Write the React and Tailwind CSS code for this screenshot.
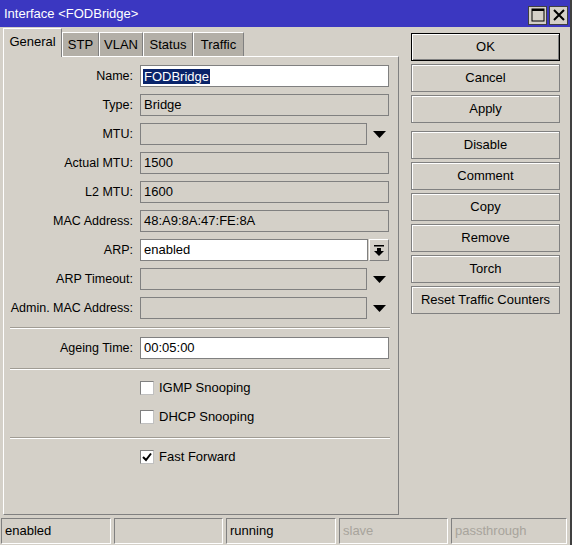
import React from "react";

function Field({ value, white, w = "w-[249px]", selected }) {
  return (
    <div
      className={`${w} h-[22px] border border-[#808080] flex items-center pl-[2px] ${
        white ? "bg-white" : "bg-[#d4d0c8]"
      }`}
    >
      {selected ? (
        <span className="bg-[#0a246a] text-white leading-[15px] px-px">{value}</span>
      ) : (
        <span className="pl-px">{value}</span>
      )}
    </div>
  );
}

function Arrow() {
  return (
    <div className="w-[22px] h-[22px] flex items-center justify-center pl-[2px]">
      <svg width="13" height="7" viewBox="0 0 13 7">
        <polygon points="0,0 13,0 6.5,7" fill="#000" />
      </svg>
    </div>
  );
}

function Row({ label, children }) {
  return (
    <div className="flex items-center h-[22px]">
      <div className="w-[130px] text-right pr-[1px] whitespace-nowrap text-[12.5px]">{label}</div>
      <div className="ml-[6px] flex">{children}</div>
    </div>
  );
}

function Sep({ mt }) {
  return (
    <div className={`${mt} ml-[6px] w-[380px] h-[2px] border-t border-[#a09c94] border-b border-b-white`} />
  );
}

function Check({ label, checked, mt }) {
  return (
    <div className={`${mt} flex items-center h-[22px] pl-[136px]`}>
      <div className="w-[14px] h-[14px] bg-white border border-t-[#808080] border-l-[#808080] border-b-[#c0c0c0] border-r-[#c0c0c0] flex items-center justify-center">
        {checked && (
          <svg width="12" height="12" viewBox="0 0 12 12">
            <path d="M2 6 L5 9 L10 2.5" stroke="#000" strokeWidth="2" fill="none" />
          </svg>
        )}
      </div>
      <span className="ml-[5px]">{label}</span>
    </div>
  );
}

function Btn({ children, def, mt = "" }) {
  return (
    <div
      className={`${mt} w-[149px] h-[28px] flex items-center justify-center border ${
        def
          ? "border-black shadow-[inset_1px_1px_0_#fff,inset_-1px_-1px_0_#808080]"
          : "border-[#808080] shadow-[inset_1px_1px_0_#fff]"
      }`}
    >
      {children}
    </div>
  );
}

function Cell({ text, gray, w = "w-[110px]" }) {
  return (
    <div
      className={`${w} h-[26px] border border-t-[#808080] border-l-[#808080] border-b-white border-r-white flex items-center pl-[3px] ${
        gray ? "text-[#a8a49c]" : "text-black"
      }`}
    >
      {text}
    </div>
  );
}

export default function App() {
  return (
    <div className="w-[572px] h-[545px] bg-[#d4d0c8] font-['Liberation_Sans',Arial,sans-serif] text-[13px] text-black border-r-2 border-[#404040] flex flex-col overflow-hidden">
      {/* title bar */}
      <div className="h-[27px] bg-[#3b37c1] flex items-center shrink-0">
        <span className="pl-[4px] text-white">Interface &lt;FODBridge&gt;</span>
        <div className="ml-auto flex gap-[2px] mr-[2px] mt-[3px]">
          <div className="w-[19px] h-[19px] bg-[#d4d0c8] border border-[#404040] flex items-center justify-center">
            <svg width="14" height="14" viewBox="0 0 14 14">
              <rect x="1" y="1" width="12" height="12" fill="none" stroke="#000" strokeWidth="1" />
              <rect x="1" y="1" width="12" height="2" fill="#000" />
            </svg>
          </div>
          <div className="w-[19px] h-[19px] bg-[#d4d0c8] border border-[#404040] flex items-center justify-center">
            <svg width="14" height="14" viewBox="0 0 14 14">
              <path d="M2 2 L12 12 M12 2 L2 12" stroke="#000" strokeWidth="2" />
            </svg>
          </div>
        </div>
      </div>

      {/* body */}
      <div className="flex h-[491px] shrink-0">
        {/* left */}
        <div className="ml-[3px] w-[396px] flex flex-col">
          <div className="mt-[1px] h-[28px] flex items-end">
            <div className="relative z-10 w-[59px] h-[29px] -mb-px bg-[#d4d0c8] border-l border-t border-white border-r border-r-[#808080] flex items-center justify-center pb-[3px]">
              General
            </div>
            {[
              ["STP", "w-[37px]"],
              ["VLAN", "w-[44px]"],
              ["Status", "w-[50px]"],
              ["Traffic", "w-[51px]"],
            ].map(([t, w]) => (
              <div
                key={t}
                className={`${w} h-[24px] bg-[#b3afa7] border-l border-t border-white border-r border-r-[#808080] flex items-center justify-center`}
              >
                {t}
              </div>
            ))}
          </div>
          <div className="h-[459px] border border-t-white border-l-white border-r-[#808080] border-b-[#808080] pt-[8px] flex flex-col gap-[7px]">
            <Row label="Name:">
              <Field value="FODBridge" white selected />
            </Row>
            <Row label="Type:">
              <Field value="Bridge" />
            </Row>
            <Row label="MTU:">
              <Field value="" w="w-[227px]" />
              <Arrow />
            </Row>
            <Row label="Actual MTU:">
              <Field value="1500" />
            </Row>
            <Row label="L2 MTU:">
              <Field value="1600" />
            </Row>
            <Row label="MAC Address:">
              <Field value="48:A9:8A:47:FE:8A" />
            </Row>
            <Row label="ARP:">
              <Field value="enabled" white w="w-[228px]" />
              <div className="ml-px w-[20px] h-[22px] border border-t-white border-l-white border-b-[#808080] border-r-[#808080] flex items-center justify-center">
                <svg width="10" height="11" viewBox="0 0 10 11">
                  <rect x="0" y="0" width="10" height="1.5" fill="#000" />
                  <rect x="3" y="3" width="4" height="3" fill="#000" />
                  <polygon points="0,6 10,6 5,11" fill="#000" />
                </svg>
              </div>
            </Row>
            <Row label="ARP Timeout:">
              <Field value="" w="w-[227px]" />
              <Arrow />
            </Row>
            <Row label="Admin. MAC Address:">
              <Field value="" w="w-[227px]" />
              <Arrow />
            </Row>
            <div className="flex flex-col">
              <Sep mt="mt-px" />
              <div className="mt-[8px]">
                <Row label="Ageing Time:">
                  <Field value="00:05:00" white />
                </Row>
              </div>
              <Sep mt="mt-[9px]" />
              <Check label="IGMP Snooping" mt="mt-[7px]" />
              <Check label="DHCP Snooping" mt="mt-[7px]" />
              <Sep mt="mt-[9px]" />
              <Check label="Fast Forward" checked mt="mt-[7px]" />
            </div>
          </div>
        </div>

        {/* right buttons */}
        <div className="ml-[12px] pt-[6px] flex flex-col gap-[3px]">
          <Btn def>OK</Btn>
          <Btn>Cancel</Btn>
          <Btn>Apply</Btn>
          <Btn mt="mt-[5px]">Disable</Btn>
          <Btn>Comment</Btn>
          <Btn>Copy</Btn>
          <Btn>Remove</Btn>
          <Btn>Torch</Btn>
          <Btn>Reset Traffic Counters</Btn>
        </div>
      </div>

      {/* status bar */}
      <div className="flex gap-[3px] pl-[1px] shrink-0">
        <Cell text="enabled" />
        <Cell text="" w="w-[109px]" />
        <Cell text="running" />
        <Cell text="slave" gray w="w-[109px]" />
        <Cell text="passthrough" gray w="w-[116px]" />
      </div>
    </div>
  );
}
